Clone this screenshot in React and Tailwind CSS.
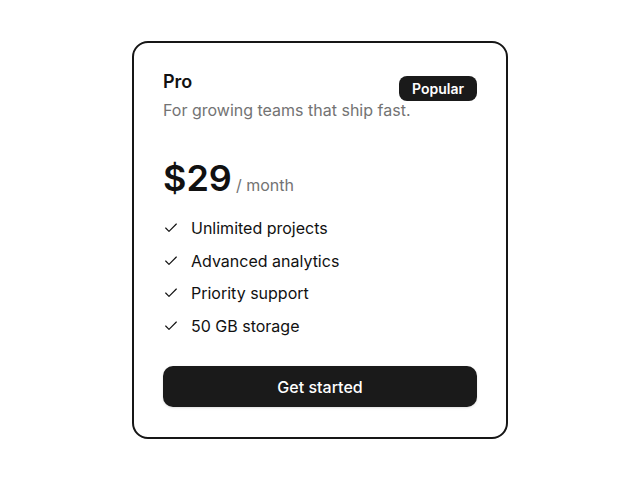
import { Check } from "lucide-react";

export default function App() {
  const features = ["Unlimited projects", "Advanced analytics", "Priority support", "50 GB storage"];

  return (
    <div className="w-[640px] h-[480px] bg-white flex items-center justify-center font-['Inter',sans-serif]">
      <div className="w-[376px] h-[398px] border-2 border-[#161616] rounded-[16px] bg-white p-[29px] flex flex-col">
        {/* Header */}
        <div className="relative">
          <h2 className="text-[18px] leading-[20px] font-semibold text-[#111]">Pro</h2>
          <p className="mt-[6px] text-[16px] leading-[24px] text-[#737373] whitespace-nowrap">For growing teams that ship fast.</p>
          <span className="absolute right-0 top-[4px] h-[25px] px-[13px] rounded-[8px] bg-[#1a1a1a] text-white text-[14px] font-semibold flex items-center">
            Popular
          </span>
        </div>

        {/* Price */}
        <div className="mt-[36px] flex items-baseline gap-[4px]">
          <span className="text-[36px] leading-[40px] font-semibold text-[#111]">$29</span>
          <span className="text-[16px] text-[#737373]">/ month</span>
        </div>

        {/* Features */}
        <ul className="mt-[18px] flex flex-col gap-[8.5px]">
          {features.map((f) => (
            <li key={f} className="flex items-center gap-[12px] text-[16px] leading-[24px] text-[#111]">
              <Check size={16} strokeWidth={1.75} className="text-[#111]" />
              {f}
            </li>
          ))}
        </ul>

        <button className="mt-auto mb-[1px] h-[41px] w-full rounded-[10px] bg-[#1a1a1a] text-white text-[16px] font-medium shadow-sm">
          Get started
        </button>
      </div>
    </div>
  );
}
